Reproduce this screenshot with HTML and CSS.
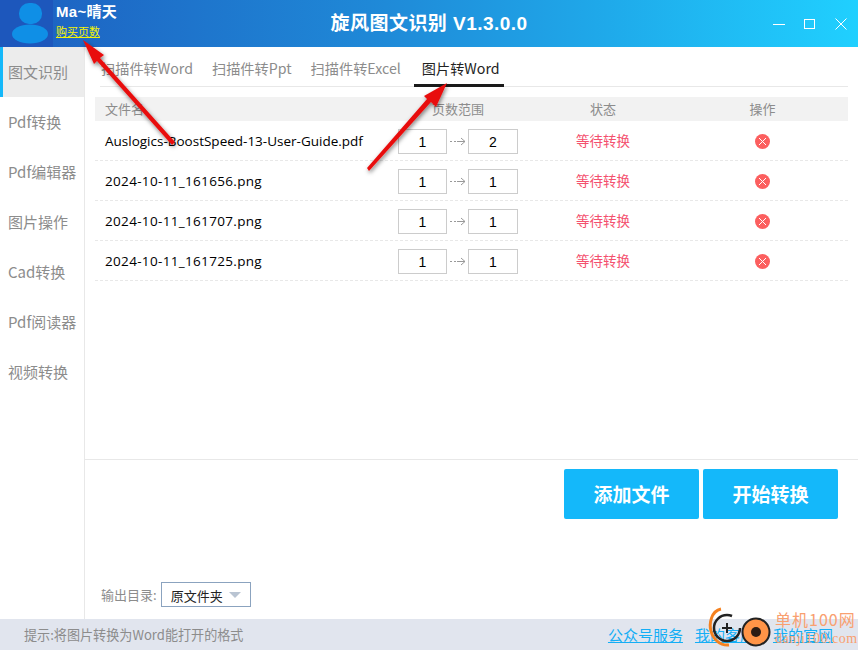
FILE: index.html
```html
<!DOCTYPE html>
<html>
<head>
<meta charset="utf-8" />
<title>旋风图文识别</title>
<link rel="stylesheet" href="styles.css">
</head>
<body>
<div class="app">

  <div class="header">
    <div class="avatar">
      <svg width="53" height="47" viewBox="0 0 53 47">
        <rect x="19" y="3" width="23" height="21" rx="10" fill="#0f8fe6" />
        <ellipse cx="30" cy="34" rx="18" ry="9.5" fill="#0f8fe6" />
      </svg>
    </div>
    <div class="user">
      <div class="userName">Ma~晴天</div>
      <a class="buyLink">购买页数</a>
    </div>
    <div class="appTitle">旋风图文识别 V1.3.0.0</div>
    <div class="winBtns">
      <svg width="12" height="12" viewBox="0 0 12 12"><path d="M0 6.5H12" stroke="#fff" fill="none" /></svg>
      <svg width="12" height="12" viewBox="0 0 12 12"><rect x="0.5" y="1.5" width="10" height="9" stroke="#fff" fill="none" /></svg>
      <svg width="12" height="12" viewBox="0 0 12 12"><path d="M0.5 0.5L11.5 11.5M11.5 0.5L0.5 11.5" stroke="#fff" fill="none" /></svg>
    </div>
  </div>

  <div class="body">
    <div class="sidebar">
      <div class="navItem active">图文识别</div>
      <div class="navItem">Pdf转换</div>
      <div class="navItem">Pdf编辑器</div>
      <div class="navItem">图片操作</div>
      <div class="navItem">Cad转换</div>
      <div class="navItem">Pdf阅读器</div>
      <div class="navItem">视频转换</div>
    </div>

    <div class="main">
      <div class="tabs">
        <div class="tab">扫描件转Word</div>
        <div class="tab">扫描件转Ppt</div>
        <div class="tab">扫描件转Excel</div>
        <div class="tab current">图片转Word</div>
      </div>

      <div class="fileTable">
        <div class="row head">
          <div class="colName">文件名</div>
          <div class="colPages">页数范围</div>
          <div class="colState">状态</div>
          <div class="colOp">操作</div>
        </div>
        <div class="row">
          <div class="colName">Auslogics-BoostSpeed-13-User-Guide.pdf</div>
          <div class="colPages"><span class="pageBox">1</span><span class="pageArrow"><svg width="16" height="9" viewBox="0 0 16 9"><path d="M0 4.5H2M4 4.5H6M7 4.5H15M11 1L15 4.5L11 8" stroke="#999" fill="none" /></svg></span><span class="pageBox last">2</span></div>
          <div class="colState">等待转换</div>
          <div class="colOp"><span class="delBtn"><svg width="9" height="9" viewBox="0 0 9 9"><path d="M1 1L8 8M8 1L1 8" stroke="#fff" fill="none" /></svg></span></div>
        </div>
        <div class="row">
          <div class="colName dated">2024-10-11_161656.png</div>
          <div class="colPages"><span class="pageBox">1</span><span class="pageArrow"><svg width="16" height="9" viewBox="0 0 16 9"><path d="M0 4.5H2M4 4.5H6M7 4.5H15M11 1L15 4.5L11 8" stroke="#999" fill="none" /></svg></span><span class="pageBox last">1</span></div>
          <div class="colState">等待转换</div>
          <div class="colOp"><span class="delBtn"><svg width="9" height="9" viewBox="0 0 9 9"><path d="M1 1L8 8M8 1L1 8" stroke="#fff" fill="none" /></svg></span></div>
        </div>
        <div class="row">
          <div class="colName dated">2024-10-11_161707.png</div>
          <div class="colPages"><span class="pageBox">1</span><span class="pageArrow"><svg width="16" height="9" viewBox="0 0 16 9"><path d="M0 4.5H2M4 4.5H6M7 4.5H15M11 1L15 4.5L11 8" stroke="#999" fill="none" /></svg></span><span class="pageBox last">1</span></div>
          <div class="colState">等待转换</div>
          <div class="colOp"><span class="delBtn"><svg width="9" height="9" viewBox="0 0 9 9"><path d="M1 1L8 8M8 1L1 8" stroke="#fff" fill="none" /></svg></span></div>
        </div>
        <div class="row">
          <div class="colName dated">2024-10-11_161725.png</div>
          <div class="colPages"><span class="pageBox">1</span><span class="pageArrow"><svg width="16" height="9" viewBox="0 0 16 9"><path d="M0 4.5H2M4 4.5H6M7 4.5H15M11 1L15 4.5L11 8" stroke="#999" fill="none" /></svg></span><span class="pageBox last">1</span></div>
          <div class="colState">等待转换</div>
          <div class="colOp"><span class="delBtn"><svg width="9" height="9" viewBox="0 0 9 9"><path d="M1 1L8 8M8 1L1 8" stroke="#fff" fill="none" /></svg></span></div>
        </div>
      </div>

      <div class="actions">
        <div class="bigBtn">添加文件</div>
        <div class="bigBtn">开始转换</div>
      </div>

      <div class="outDir">
        <span class="outLabel">输出目录:</span>
        <div class="outSelect">原文件夹<span class="caret"></span></div>
      </div>
    </div>
  </div>

  <div class="footer">
    <div class="hint">提示:将图片转换为Word能打开的格式</div>
    <div class="links">
      <a>公众号服务</a>
      <a>我的客服</a>
      <a>我的官网</a>
    </div>
  </div>

  <!-- red arrows drawn on top of the screenshot -->
  <svg class="arrows" width="858" height="650" viewBox="0 0 858 650">
    <defs>
      <filter id="arrowShadow" x="-20%" y="-20%" width="140%" height="140%">
        <feDropShadow dx="1" dy="2" stdDeviation="2" flood-color="#000" flood-opacity="0.5" />
      </filter>
    </defs>
    <g filter="url(#arrowShadow)" fill="#e81010">
      <path d="M83 40L104 55L100 58L175 142L172 145L97 61L94 64Z" />
      <path d="M447 83L436 107L431 102L369 171L367 168L427 99L424 96Z" />
    </g>
  </svg>

  <!-- site watermark in the corner -->
  <div class="stamp">
    <svg width="75" height="50" viewBox="0 0 75 50">
      <path d="M21 9C11 11 9 24 11 31C13 39 20 46 29 45" stroke="#f5811f" stroke-width="3" fill="none" />
      <circle cx="27" cy="28" r="13" stroke="#222" stroke-width="2.5" fill="none" stroke-dasharray="66 16" />
      <path d="M27 23V33M22 28H32" stroke="#222" stroke-width="2" fill="none" />
      <circle cx="56" cy="32" r="13.5" fill="#ff9447" stroke="#222" stroke-width="2" />
      <circle cx="56" cy="32" r="5" fill="#2b1c14" />
    </svg>
    <div class="stampText">
      <div class="stampCn">单机100网</div>
      <div class="stampEn">danji100.com</div>
    </div>
  </div>

</div>
</body>
</html>
```

FILE: styles.css
```css
html, body {
  margin: 0;
  padding: 0;
}

body {
  font-family: "Noto Sans CJK SC", "Liberation Sans", sans-serif;
  font-size: 14px;
  color: #000;
  background: #fff;
}

.app {
  position: relative;
  width: 858px;
  height: 650px;
  display: flex;
  flex-direction: column;
  overflow: hidden;
}

/* title bar */
.header {
  height: 47px;
  flex: none;
  display: flex;
  align-items: stretch;
  color: #fff;
  background: linear-gradient(to right, #1d5fc0 0%, #1f8ad8 45%, #1fa6e8 68%, #20d0ff 100%);
}

.avatar {
  width: 53px;
  background: #1d57bc;
}

.user {
  width: 0;
  flex: none;
  padding-left: 3px;
  white-space: nowrap;
}

.userName {
  font-family: "Liberation Sans", "Noto Sans CJK SC", sans-serif;
  font-size: 15px;
  font-weight: bold;
  line-height: 16px;
  letter-spacing: 0.3px;
  margin-top: 4px;
}

.buyLink {
  display: block;
  font-size: 11px;
  line-height: 14px;
  margin-top: 4px;
  color: #f4f400;
  text-decoration: underline;
}

.appTitle {
  flex: 1;
  text-align: center;
  font-family: "Liberation Sans", "Noto Sans CJK SC", sans-serif;
  font-size: 19px;
  font-weight: bold;
  line-height: 48px;
  padding-left: 32px;
  letter-spacing: 0.45px;
}

.winBtns {
  display: flex;
  align-items: center;
  gap: 19px;
  padding: 0 0 0 3px;
  width: 88px;
  flex: none;
  box-sizing: border-box;
}

/* left nav + content */
.body {
  flex: 1;
  display: flex;
  min-height: 0;
}

.sidebar {
  width: 84px;
  flex: none;
  border-right: 1px solid #e8e8e8;
}

.navItem {
  height: 50px;
  line-height: 50px;
  padding-left: 8px;
  font-size: 15px;
  color: #8c8c8c;
  white-space: nowrap;
}

.navItem.active {
  padding-left: 5px;
  background: #ececec;
  border-left: 3px solid #14b8fa;
}

.main {
  flex: 1;
  display: flex;
  flex-direction: column;
  min-width: 0;
}

.tabs {
  height: 39px;
  margin: 0 10px 0 15px;
  padding-left: 1px;
  display: flex;
  gap: 19px;
  border-bottom: 1px solid #e8e8e8;
}

.tab {
  height: 40px;
  line-height: 42px;
  font-size: 14.2px;
  color: #8c8c8c;
  white-space: nowrap;
  box-sizing: border-box;
}

.tab.current {
  width: 90px;
  margin-left: -6px;
  padding-left: 8px;
  color: #222;
  border-bottom: 3px solid #1a1a1a;
}

.fileTable {
  margin: 10px 10px 0 10px;
  flex: none;
  height: 362px;
}

.row {
  height: 40px;
  display: flex;
  align-items: center;
  font-size: 13.5px;
  padding-top: 1px;
  border-bottom: 1px dashed #e8e8e8;
  box-sizing: border-box;
}

.row.head {
  height: 24px;
  font-size: 13px;
  color: #8c8c8c;
  background: #f2f2f2;
  padding-top: 0;
  padding-bottom: 2px;
  border-bottom: 0;
}

.colName {
  width: 303px;
  flex: none;
  padding-left: 10px;
  box-sizing: border-box;
  white-space: nowrap;
  font-family: "Open Sans", "Noto Sans CJK SC", sans-serif;
  font-size: 13.5px;
}

.colName.dated {
  letter-spacing: 0.33px;
}

.head .colName {
  font-family: "Noto Sans CJK SC", sans-serif;
  font-size: 13px;
}

.colPages {
  width: 120px;
  flex: none;
  display: flex;
  align-items: center;
  justify-content: center;
}

.colState {
  width: 170px;
  flex: none;
  margin-top: -3px;
  text-align: center;
  color: #f4506e;
}

.head .colState {
  margin-top: 0;
  color: #8c8c8c;
}

.colOp {
  width: 149px;
  flex: none;
  display: flex;
  justify-content: center;
}

.pageBox {
  width: 49px;
  height: 25px;
  line-height: 25px;
  flex: none;
  text-align: center;
  font-family: "Liberation Sans", sans-serif;
  font-size: 14px;
  border: 1px solid #ccc;
  box-sizing: border-box;
}

.pageBox.last {
  width: 50px;
}

.pageArrow {
  width: 21px;
  flex: none;
  display: flex;
  justify-content: center;
}

.delBtn {
  width: 15px;
  height: 15px;
  border-radius: 50%;
  background: #fc5f5f;
  display: flex;
  align-items: center;
  justify-content: center;
}

.actions {
  height: 159px;
  flex: none;
  box-sizing: border-box;
  border-top: 1px solid #e8e8e8;
  padding: 9px 20px 0 0;
  display: flex;
  justify-content: flex-end;
  gap: 4px;
}

.bigBtn {
  width: 135px;
  height: 50px;
  line-height: 50px;
  text-align: center;
  font-size: 19px;
  font-weight: bold;
  color: #fff;
  background: #14b8fa;
  border-radius: 2px;
}

.outDir {
  display: flex;
  align-items: center;
  gap: 4px;
  padding-left: 16px;
  margin-top: -36px;
}

.outLabel {
  font-size: 13px;
  color: #8c8c8c;
}

.outSelect {
  width: 90px;
  height: 25px;
  line-height: 25px;
  box-sizing: border-box;
  border: 1px solid #8ba3bf;
  padding-left: 9px;
  font-size: 13px;
  color: #222;
  position: relative;
}

.caret {
  position: absolute;
  top: 9px;
  right: 9px;
  border-left: 6px solid transparent;
  border-right: 6px solid transparent;
  border-top: 6px solid #b9c4d2;
}

.footer {
  height: 31px;
  flex: none;
  background: #e1e5ee;
  display: flex;
  align-items: center;
  justify-content: space-between;
  padding: 0 0 0 24px;
}

.hint {
  font-size: 13.1px;
  color: #8c8c8c;
}

.links {
  display: flex;
  gap: 12px;
  font-size: 15px;
  color: #14aef5;
  padding-right: 25px;
}

.links a {
  text-decoration: underline;
}

.links a:last-child {
  margin-left: 6px;
}

.arrows {
  position: absolute;
  left: 0;
  top: 0;
  pointer-events: none;
}

.stamp {
  position: absolute;
  left: 700px;
  top: 590px;
  width: 158px;
  height: 60px;
}

.stamp svg {
  position: absolute;
  left: 0;
  top: 10px;
}

.stampText {
  position: absolute;
  left: 75px;
  top: 20px;
  color: #f9a070;
  white-space: nowrap;
}

.stampCn {
  font-family: "Noto Sans CJK SC", sans-serif;
  font-size: 16px;
  line-height: 19px;
  letter-spacing: 1px;
}

.stampEn {
  font-family: "Liberation Serif", serif;
  font-size: 14px;
  line-height: 16px;
  letter-spacing: 0.5px;
  margin-top: 2px;
}
```
